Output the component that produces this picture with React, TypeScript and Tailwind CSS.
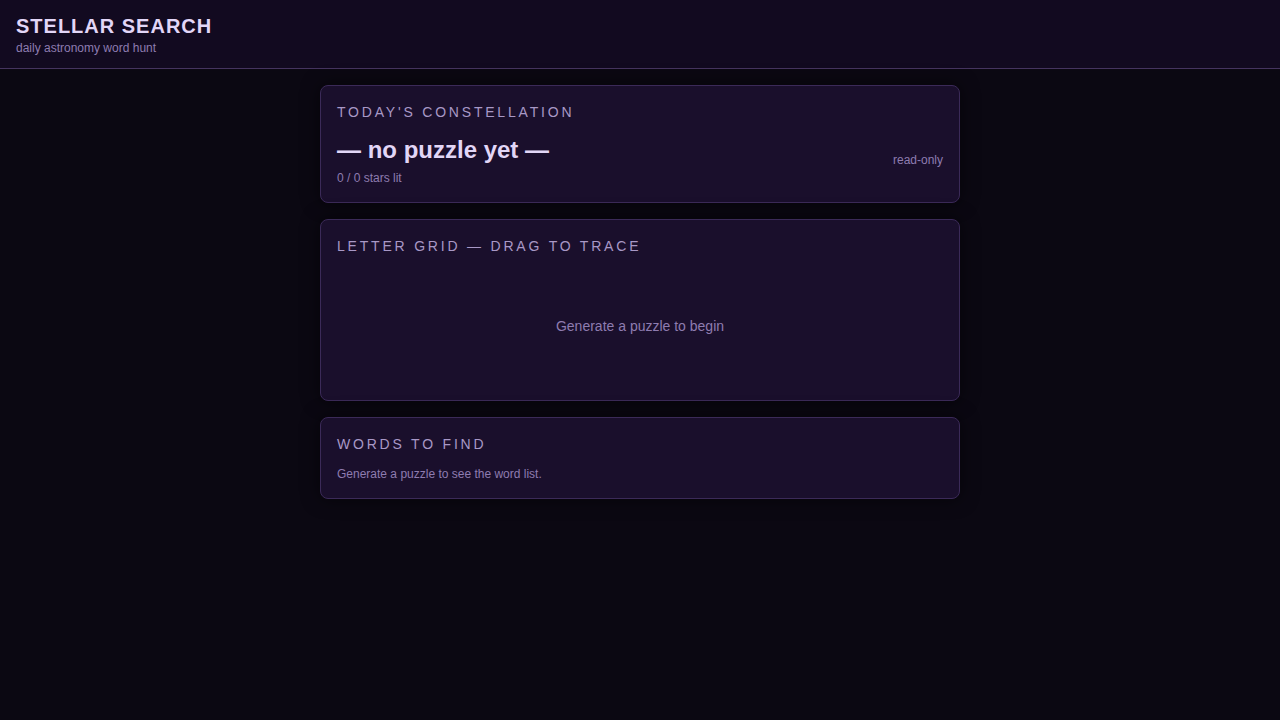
import React from 'react';

const Card: React.FC<{ label: string; children: React.ReactNode }> = ({ label, children }) => (
  <section className="rounded-lg border border-[#3b2a58] bg-[#1a0f2c] p-4 shadow-[0_0_18px_rgba(0,0,0,0.55)]">
    <h2 className="mb-3 text-sm leading-5 uppercase tracking-[0.2em] text-[#a898c6]">{label}</h2>
    {children}
  </section>
);

export default function App() {
  return (
    <div className="min-h-screen bg-[#0b0812] font-['Liberation_Sans',Arial,sans-serif]">
      <header className="border-b border-[#45345f] bg-[#120a20] px-4 py-3">
        <h1 className="text-xl leading-7 font-bold tracking-wider text-[#e2d6f7]">STELLAR SEARCH</h1>
        <p className="text-xs leading-4 text-[#8e7cb0]">daily astronomy word hunt</p>
      </header>

      <main className="mx-auto flex w-[640px] flex-col gap-4 pt-4">
        <Card label="Today's Constellation">
          <div className="flex items-center justify-between">
            <div>
              <div className="text-2xl leading-8 font-bold text-[#e2d6f7]">— no puzzle yet —</div>
              <div className="mt-1 text-xs leading-4 text-[#8e7cb0]">0 / 0 stars lit</div>
            </div>
            <span className="text-xs text-[#8e7cb0]">read-only</span>
          </div>
        </Card>

        <Card label="Letter grid — drag to trace">
          <div className="py-12 text-center text-sm leading-5 text-[#8e7cb0]">Generate a puzzle to begin</div>
        </Card>

        <Card label="Words to find">
          <p className="text-xs leading-4 text-[#8e7cb0]">Generate a puzzle to see the word list.</p>
        </Card>
      </main>
    </div>
  );
}
